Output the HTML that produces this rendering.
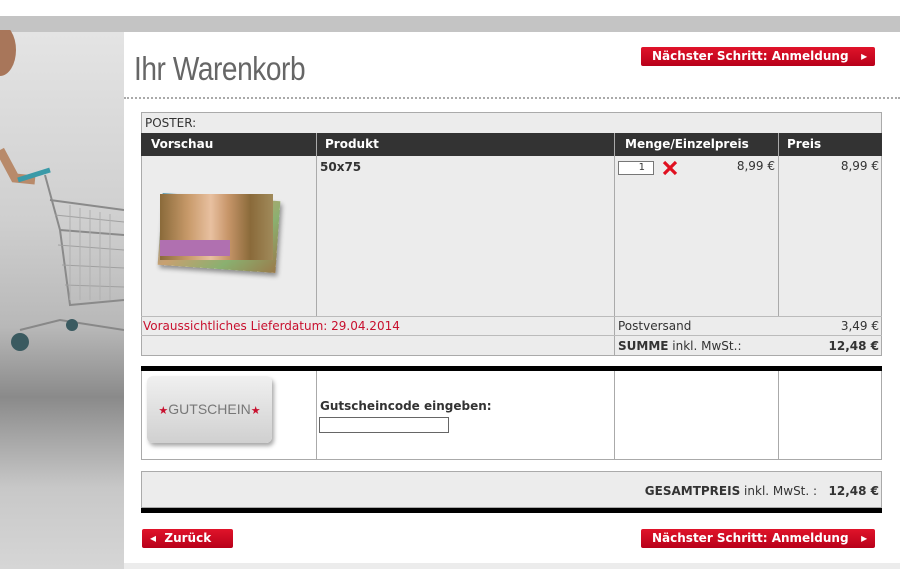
<!DOCTYPE html>
<html><head><meta charset="utf-8"><style>
*{margin:0;padding:0;box-sizing:border-box}
body{width:900px;height:569px;overflow:hidden;background:#fff;font-family:"DejaVu Sans","Liberation Sans",sans-serif;font-size:12px;color:#333;position:relative}
.abs{position:absolute}
.btn{position:absolute;height:19px;background:linear-gradient(#e0142a,#b8001a);color:#fff;font-weight:bold;font-size:12px;line-height:19px;border-radius:2px;white-space:nowrap}
</style></head><body>
<div class="abs" style="left:0;top:16px;width:900px;height:16px;background:#c4c4c4"></div>
<div class="abs" style="left:0;top:32px;width:124px;height:537px;background:linear-gradient(#e4e4e4,#cfcfcf 35%,#b8b8b8 55%,#8a8a8a 68%,#c8c8c8 85%,#d6d6d6)"></div>
<svg class="abs" style="left:0;top:30px" width="124" height="330" viewBox="0 0 124 330">
<ellipse cx="0" cy="20" rx="16" ry="26" fill="#a8765a"/>
<path d="M0 120 L15 148 L35 150" stroke="#b88a6a" stroke-width="9" fill="none"/>
<path d="M18 150 L50 140" stroke="#3a9aa8" stroke-width="5"/>
<path d="M45 145 L60 200 L70 275 L124 270 M60 200 L124 205 M50 170 L124 180" fill="none" stroke="#8a8a8a" stroke-width="2"/>
<path d="M55 185 L124 192 M58 215 L124 220 M62 235 L124 238 M65 255 L124 257" stroke="#a0a0a0" stroke-width="1"/>
<path d="M70 175 L70 270 M80 178 L80 270 M90 180 L90 270 M100 182 L100 270 M110 184 L110 270" stroke="#b0b0b0" stroke-width="1"/>
<path d="M20 300 L60 290 L124 300" stroke="#888" stroke-width="2" fill="none"/>
<circle cx="20" cy="312" r="9" fill="#3a5a60"/><circle cx="72" cy="295" r="6" fill="#3a5a60"/>
</svg>
<div class="abs" style="left:124px;top:32px;width:776px;height:531px;background:#fff"></div>
<div class="abs" style="left:124px;top:563px;width:776px;height:6px;background:#ececec"></div>
<div class="abs" style="left:134px;top:50px;font-family:'Liberation Sans Narrow','Liberation Sans',sans-serif;font-size:33px;color:#666;transform:scaleX(.85);transform-origin:left;letter-spacing:-0.5px">Ihr Warenkorb</div>
<div class="abs" style="left:124px;top:97px;width:776px;border-top:2px dotted #aaa"></div>
<div class="btn" style="left:641px;top:47px;width:234px;padding-left:11px">Nächster Schritt: Anmeldung &nbsp;&nbsp;▸</div>
<div class="abs" style="left:141px;top:112px;width:741px;height:244px;background:#ececec;border:1px solid #aaa"></div>
<div class="abs" style="left:145px;top:116px;font-size:12px">POSTER:</div>
<div class="abs" style="left:141px;top:133px;width:741px;height:23px;background:#333;color:#fff;font-weight:bold;font-size:12px;line-height:23px">
<span class="abs" style="left:10px">Vorschau</span><span class="abs" style="left:184px">Produkt</span><span class="abs" style="left:484px">Menge/Einzelpreis</span><span class="abs" style="left:646px">Preis</span></div>
<div class="abs" style="left:316px;top:133px;width:1px;height:184px;background:#aaa"></div>
<div class="abs" style="left:614px;top:133px;width:1px;height:223px;background:#aaa"></div>
<div class="abs" style="left:778px;top:133px;width:1px;height:184px;background:#aaa"></div>
<div class="abs" style="left:141px;top:316px;width:741px;height:1px;background:#bbb"></div>
<div class="abs" style="left:141px;top:335px;width:741px;height:1px;background:#bbb"></div>
<div class="abs" style="left:320px;top:160px;font-weight:bold">50x75</div>
<div class="abs" style="left:160px;top:197px;width:118px;height:72px;transform:rotate(4deg);background:linear-gradient(135deg,#5a9ab0,#c8a070 40%,#8ab070 70%,#9a7a4a);box-shadow:2px 3px 5px rgba(0,0,0,.4)"></div>
<div class="abs" style="left:160px;top:194px;width:113px;height:66px;background:linear-gradient(90deg,#8a6a3a,#c89a6a 25%,#e8c0a0 45%,#c8966a 60%,#8a6a3a 80%,#a08a5a);"></div>
<div class="abs" style="left:160px;top:240px;width:70px;height:16px;background:#b070b0"></div>
<div class="abs" style="left:618px;top:161px;width:36px;height:14px;border:1px solid #777;background:#fff;font-size:10px;text-align:right;padding-right:8px;line-height:12px">1</div>
<svg class="abs" style="left:662px;top:160px" width="16" height="16" viewBox="0 0 16 16"><path d="M2 2 L14 14 M14 2 L2 14" stroke="#e01020" stroke-width="3.2"/></svg>
<div class="abs" style="left:700px;top:159px;width:75px;text-align:right">8,99 €</div>
<div class="abs" style="left:790px;top:159px;width:89px;text-align:right">8,99 €</div>
<div class="abs" style="left:143px;top:319px;color:#c8102e">Voraussichtliches Lieferdatum: 29.04.2014</div>
<div class="abs" style="left:618px;top:319px">Postversand</div>
<div class="abs" style="left:780px;top:319px;width:99px;text-align:right">3,49 €</div>
<div class="abs" style="left:618px;top:339px"><b>SUMME</b> inkl. MwSt.:</div>
<div class="abs" style="left:780px;top:339px;width:99px;text-align:right;font-weight:bold">12,48 €</div>
<div class="abs" style="left:141px;top:366px;width:741px;height:5px;background:#000"></div>
<div class="abs" style="left:141px;top:371px;width:741px;height:89px;border:1px solid #aaa;border-top:none"></div>
<div class="abs" style="left:316px;top:371px;width:1px;height:89px;background:#aaa"></div>
<div class="abs" style="left:614px;top:371px;width:1px;height:89px;background:#aaa"></div>
<div class="abs" style="left:778px;top:371px;width:1px;height:89px;background:#aaa"></div>
<div class="abs" style="left:147px;top:376px;width:125px;height:67px;border-radius:6px;background:linear-gradient(#f0f0f0,#d0d0d0);box-shadow:2px 3px 4px rgba(0,0,0,.35);font-family:'Liberation Sans Narrow','Liberation Sans',sans-serif;color:#777;font-size:14px;line-height:67px;text-align:center;white-space:nowrap"><span style="color:#c8102e;font-size:11px">★</span>GUTSCHEIN<span style="color:#c8102e;font-size:11px">★</span></div>
<div class="abs" style="left:320px;top:399px;font-weight:bold">Gutscheincode eingeben:</div>
<div class="abs" style="left:319px;top:417px;width:130px;height:16px;border:1px solid #666;background:#fff"></div>
<div class="abs" style="left:141px;top:471px;width:741px;height:37px;background:#ececec;border:1px solid #aaa"></div>
<div class="abs" style="left:141px;top:508px;width:741px;height:5px;background:#000"></div>
<div class="abs" style="left:500px;top:484px;width:379px;text-align:right"><b>GESAMTPREIS</b> inkl. MwSt. : &nbsp; <b>12,48 €</b></div>
<div class="btn" style="left:142px;top:529px;width:91px;padding-left:8px">◂ &nbsp;Zurück</div>
<div class="btn" style="left:641px;top:529px;width:234px;padding-left:11px">Nächster Schritt: Anmeldung &nbsp;&nbsp;▸</div>
</body></html>
